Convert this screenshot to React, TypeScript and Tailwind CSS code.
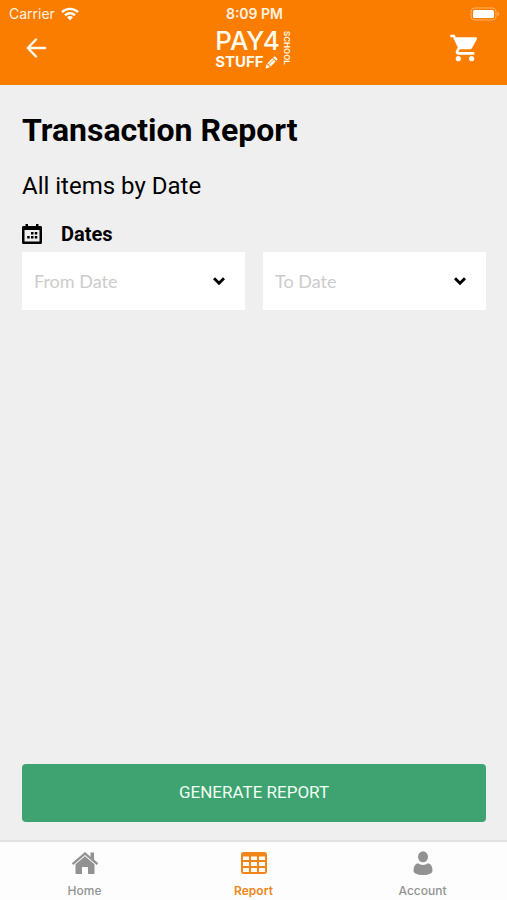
import { MdShoppingCart } from "react-icons/md"

const dates = ["Today", "Yesterday", "Last week", "Last month"]

function StatusBar() {
  return (
    <div className="grid grid-cols-3 items-center h-[27px] pl-[9px] pr-[7px] text-[#fff3e2]">
      <div className="flex items-center gap-1.5 text-[14px]">
        <span>Carrier</span>
        <svg className="w-[18px] h-[14px]" viewBox="0 0 18 14" fill="none" stroke="#fffdf5" strokeWidth="2.4">
          <path d="M1 5.2C5.4.8 12.6.8 17 5.2" />
          <path d="M4 8.3c2.800-2.800 7.200-2.800 10 0" />
          <path d="M6 10.300c1.700-1.700 4.300-1.700 6 0L9 13.400z" fill="#fffdf5" stroke="none" />
        </svg>
      </div>
      <span className="text-center text-[14px] font-semibold">8:09 PM</span>
      <svg className="justify-self-end w-[30px] h-[14px]" viewBox="0 0 30 14" fill="none">
        <rect x="1" y="1" width="25" height="12" rx="3.5" stroke="#ffb466" />
        <rect x="3" y="3" width="21" height="8" rx="1.5" fill="#fff" />
        <path d="M27.5 5v4c1-.3 1.5-1.1 1.5-2s-.5-1.700-1.500-2z" fill="#ffb466" />
      </svg>
    </div>
  )
}

function Logo() {
  return (
    <div className="flex items-start justify-center gap-0.5 font-[Inter,sans-serif] text-[#fffbef]">
      <div>
        <div className="text-[26px] leading-7 font-medium">PAY4</div>
        <div className="flex items-center gap-px text-[15px] leading-[14px] font-bold">
          <span>STUFF</span>
          <svg className="w-[13px] h-[13px]" viewBox="0 0 13 13" fill="currentColor">
            <path d="M.5 12.500l1.200-4.600 3.300 3.300z" />
            <path d="M2.400 7.200l5-5 3.300 3.300-5 5z" />
            <path d="M8.100 1.500l.8-.8c.4-.4 1-.4 1.400 0l1.900 1.900c.4.4.4 1 0 1.400l-.8.8z" />
            <path d="M3.700 8.500l4.900-4.900" stroke="#fb7d00" strokeWidth=".6" />
          </svg>
        </div>
      </div>
      <span className="pt-1 text-[8px] leading-[10px] font-semibold [writing-mode:vertical-rl]">SCHOOL</span>
    </div>
  )
}

function CalendarIcon() {
  return (
    <svg className="w-5 h-5" viewBox="0 0 20 20" aria-hidden="true">
      <path
        fillRule="evenodd"
        d="M3.500 0H6v2h8V0h2.500v2h2c.9 0 1.500.6 1.500 1.500v15c0 .9-.6 1.500-1.500 1.500h-17C.6 20 0 19.400 0 18.500v-15C0 2.600.6 2 1.500 2h2zM2.500 6v11.500h15V6z"
      />
      <path d="M9 8h2.500v2.500H9zM12.800 8h2.500v2.500h-2.500zM5.200 12h2.500v2.500H5.200zM9 12h2.500v2.500H9zM12.800 12h2.500v2.500h-2.500z" />
    </svg>
  )
}

function DateSelect({ id, label }: { id: string; label: string }) {
  return (
    <div className="grid flex-1 items-center bg-white">
      <select
        id={id}
        aria-label={label}
        defaultValue=""
        className="col-start-1 row-start-1 w-full py-[15px] px-3 appearance-none bg-transparent font-[Lato,sans-serif] text-[18px] leading-7 text-[#cccccc]"
      >
        <option value="">{label}</option>
        {dates.map((date) => (
          <option key={date}>{date}</option>
        ))}
      </select>
      <svg
        className="col-start-1 row-start-1 justify-self-end mr-5 w-3 h-2 pointer-events-none"
        viewBox="0 0 12 8"
        fill="none"
        stroke="#000"
        strokeWidth="2.900"
      >
        <path d="M1 1.200l5 5 5-5" />
      </svg>
    </div>
  )
}

function HomeIcon() {
  return (
    <svg className="w-7 h-6" viewBox="0 0 28 24" fill="currentColor">
      <path d="M14 1L.8 12.200l1.500 1.700L14 4l11.700 9.900 1.500-1.700-4.200-3.600V1.500h-3.500v4.200z" />
      <path d="M14 5.300L4.500 13.300V22c0 .6.400 1 1 1H11v-7h6v7h5.500c.6 0 1-.4 1-1v-8.700z" />
    </svg>
  )
}

function TableIcon() {
  return (
    <svg className="w-7 h-6" viewBox="0 0 28 24" fill="currentColor">
      <path
        fillRule="evenodd"
        d="M3.500 1h21C25.900 1 27 2.100 27 3.500v17c0 1.400-1.100 2.500-2.500 2.500h-21C2.100 23 1 21.900 1 20.500v-17C1 2.100 2.100 1 3.500 1zM3 5.500V9h6V5.500zm8 0V9h6V5.500zm8 0V9h6V5.500zM3 11v4h6v-4zm8 0v4h6v-4zm8 0v4h6v-4zM3 17v4h6v-4zm8 0v4h6v-4zm8 0v4h6v-4z"
      />
    </svg>
  )
}

function PersonIcon() {
  return (
    <svg className="w-7 h-6" viewBox="0 0 28 24" fill="currentColor">
      <ellipse cx="14" cy="5.800" rx="5" ry="5.500" />
      <path d="M9 12.200c1.300 1.100 3 1.700 5 1.700s3.700-.6 5-1.700c3 .7 4.500 3.300 4.500 7.300 0 2.800-3.500 4.500-9.500 4.500s-9.500-1.700-9.500-4.500c0-4 1.500-6.600 4.500-7.300z" />
    </svg>
  )
}

const tabs = [
  { label: "Home", icon: <HomeIcon />, active: false },
  { label: "Report", icon: <TableIcon />, active: true },
  { label: "Account", icon: <PersonIcon />, active: false },
]

export default function App() {
  return (
    <div className="flex flex-col min-h-screen bg-[#efefef] font-[Roboto,sans-serif] text-black">
      <header className="bg-[#fb7d00] pb-4 font-[Inter,sans-serif]">
        <StatusBar />
        <div className="grid grid-cols-3 items-center h-[42px] px-[26px]">
          <button aria-label="Back" className="justify-self-start text-[#fffbef]">
            <svg
              className="w-[21px] h-5"
              viewBox="0 0 21 20"
              fill="none"
              stroke="currentColor"
              strokeWidth="2.400"
              strokeLinecap="round"
              strokeLinejoin="round"
            >
              <path d="M19 10H2M10 1.500L1.800 10l8.200 8.500" />
            </svg>
          </button>
          <Logo />
          <button aria-label="Shopping cart" className="justify-self-end text-white">
            <MdShoppingCart className="w-8 h-8" />
          </button>
        </div>
      </header>

      <main className="flex flex-col flex-1 pl-[22px] pr-[21px] pt-[25px] pb-[18px]">
        <h1 className="text-[32px] leading-10 font-bold">Transaction Report</h1>
        <h2 className="mt-5 text-[24px] leading-8">All items by Date</h2>
        <div className="flex items-center gap-[19px] mt-[18px] mb-1">
          <CalendarIcon />
          <h3 className="text-[20px] leading-7 font-bold">Dates</h3>
        </div>
        <div className="flex gap-[18px]">
          <DateSelect id="from-date" label="From Date" />
          <DateSelect id="to-date" label="To Date" />
        </div>
        <button className="mt-auto h-[58px] rounded bg-[#3ea370] text-[17px] text-[#effff2]">
          GENERATE REPORT
        </button>
      </main>

      <nav className="grid grid-cols-3 h-[60px] pt-[9px] border-t-2 border-[#e2e2e2] bg-[#fdfdfd] font-[Inter,sans-serif]">
        {tabs.map((tab) => (
          <a
            key={tab.label}
            href="#"
            className={`flex flex-col items-center gap-2 text-[12px] leading-4 ${
              tab.active ? "font-semibold text-[#f08518]" : "font-medium text-[#929292]"
            }`}
          >
            {tab.icon}
            {tab.label}
          </a>
        ))}
      </nav>
    </div>
  )
}
